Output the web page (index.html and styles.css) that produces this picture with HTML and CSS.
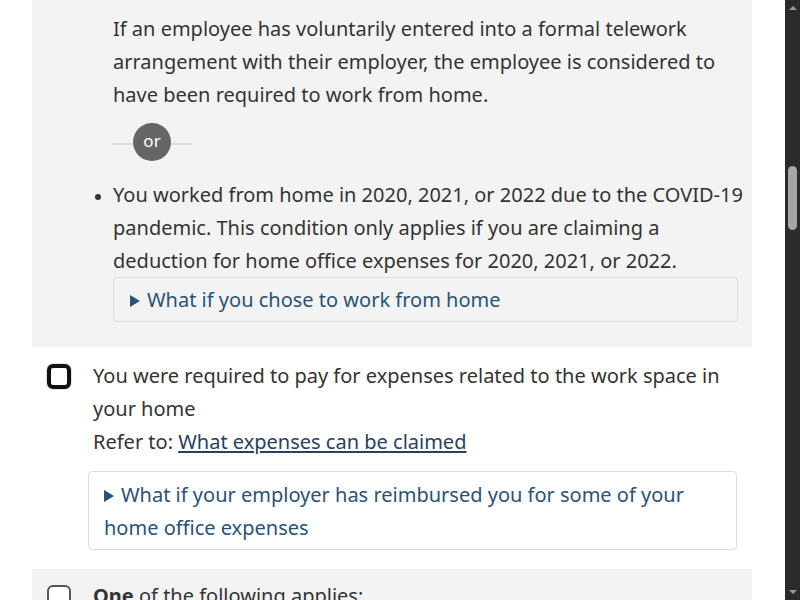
FILE: index.html
```html
<!DOCTYPE html>
<html lang="en">
<head>
<meta charset="utf-8">
<title>Home office expenses</title>
<link rel="stylesheet" href="styles.css">
</head>
<body>
<div class="page">
  <main class="main">
    <section class="panel panel-first">
      <p class="para">If an employee has voluntarily entered into a formal telework arrangement with their employer, the employee is considered to have been required to work from home.</p>
      <div class="or-divider"><span class="or">or</span></div>
      <ul class="list">
        <li>You worked from home in 2020, 2021, or 2022 due to the <span class="nowrap">COVID-19</span> pandemic. This condition only applies if you are claiming a deduction for home office expenses for 2020, 2021, or 2022.
          <details class="det det-grey"><summary>What if you chose to work from home</summary></details>
        </li>
      </ul>
    </section>

    <section class="item">
      <span class="check check-focus"></span>
      <div class="item-body">
        <p class="item-text">You were required to pay for expenses related to the work space in your home</p>
        <p class="item-text">Refer to: <a class="link" href="#">What expenses can be claimed</a></p>
        <details class="det det-white"><summary>What if your employer has reimbursed you for some of your home office expenses</summary></details>
      </div>
    </section>

    <section class="panel item item-grey">
      <span class="check check-plain"></span>
      <div class="item-body">
        <p class="item-text"><strong>One</strong> of the following applies:</p>
      </div>
    </section>
  </main>
  <aside class="scrollbar">
    <span class="arrow arrow-up"></span>
    <span class="thumb"></span>
    <span class="arrow arrow-down"></span>
  </aside>
</div>
</body>
</html>
```
FILE: styles.css
```css
html, body {
  margin: 0;
  padding: 0;
  height: 600px;
  overflow: hidden;
  background: #fff;
}
body {
  font-family: "Noto Sans", "Open Sans", sans-serif;
  font-size: 20px;
  line-height: 33px;
  color: #333;
}
.page {
  display: flex;
  height: 600px;
}
.main {
  flex: 1;
  padding-left: 32px;
  padding-right: 33px;
}
p { margin: 0; }
.nowrap { white-space: nowrap; }

.panel {
  background: #f3f3f3;
}
.panel-first {
  padding: 12px 3px 25px 81px;
}
.para {
  margin-right: 10px;
}

.or-divider {
  position: relative;
  width: 80px;
  height: 38px;
  margin: 12px 0 17px -1px;
  display: flex;
  align-items: center;
  justify-content: center;
}
.or-divider::before {
  content: "";
  position: absolute;
  left: 0;
  right: 0;
  top: 20px;
  height: 2px;
  background: #dcdcdc;
}
.or {
  position: relative;
  width: 38px;
  height: 38px;
  border-radius: 50%;
  background: #666;
  color: #fff;
  font-size: 17px;
  line-height: 36px;
  text-align: center;
}

.list {
  margin: 0;
  padding: 0;
  list-style: disc;
}
.list li::marker { font-size: 16px; }

.det {
  border: 1px solid #ddd;
  border-radius: 4px;
  color: #295376;
}
.det summary {
  list-style: none;
  cursor: pointer;
}
.det summary::-webkit-details-marker { display: none; }
.det summary::before {
  content: "";
  display: inline-block;
  width: 0;
  height: 0;
  border-top: 6px solid transparent;
  border-bottom: 6px solid transparent;
  border-left: 10px solid #295376;
  margin-right: 7px;
  vertical-align: 0px;
}
.det-grey {
  margin: 0 11px 0 0;
  padding: 5px 15px 5px 16px;
  background: #f3f3f3;
}
.det-white {
  margin: 13px 0 0 -5px;
  padding: 6px 15px 5px 15px;
  background: #fff;
}

.item {
  display: flex;
  align-items: flex-start;
  padding: 12px 15px 0 15px;
}
.item-body {
  flex: 1;
  margin-left: 22px;
}
.check {
  flex: none;
  box-sizing: border-box;
  width: 24px;
  height: 25px;
  border-radius: 6px;
  background: #fff;
}
.check-focus {
  margin-top: 5px;
  border: 4px solid #111;
  box-shadow: 0 0 0 1px #e2e2e2;
}
.check-plain {
  margin-top: 6px;
  border: 2px solid #555;
}
.item-grey {
  margin-top: 19px;
  padding-top: 10px;
  height: 60px;
}
.link {
  color: #284162;
  text-decoration: underline;
  text-underline-offset: 2px;
}
strong { font-weight: 700; }

.scrollbar {
  flex: none;
  width: 15px;
  height: 600px;
  background: #2b2b2b;
  display: flex;
  flex-direction: column;
  align-items: center;
}
.arrow {
  width: 0;
  height: 0;
  border-left: 4px solid transparent;
  border-right: 4px solid transparent;
}
.arrow-up {
  margin-top: 6px;
  border-bottom: 4px solid #9a9a9a;
}
.arrow-down {
  margin-top: auto;
  margin-bottom: 6px;
  border-top: 4px solid #9a9a9a;
}
.thumb {
  margin-top: 156px;
  width: 9px;
  height: 64px;
  border-radius: 5px;
  background: #a6a6a6;
}
```
